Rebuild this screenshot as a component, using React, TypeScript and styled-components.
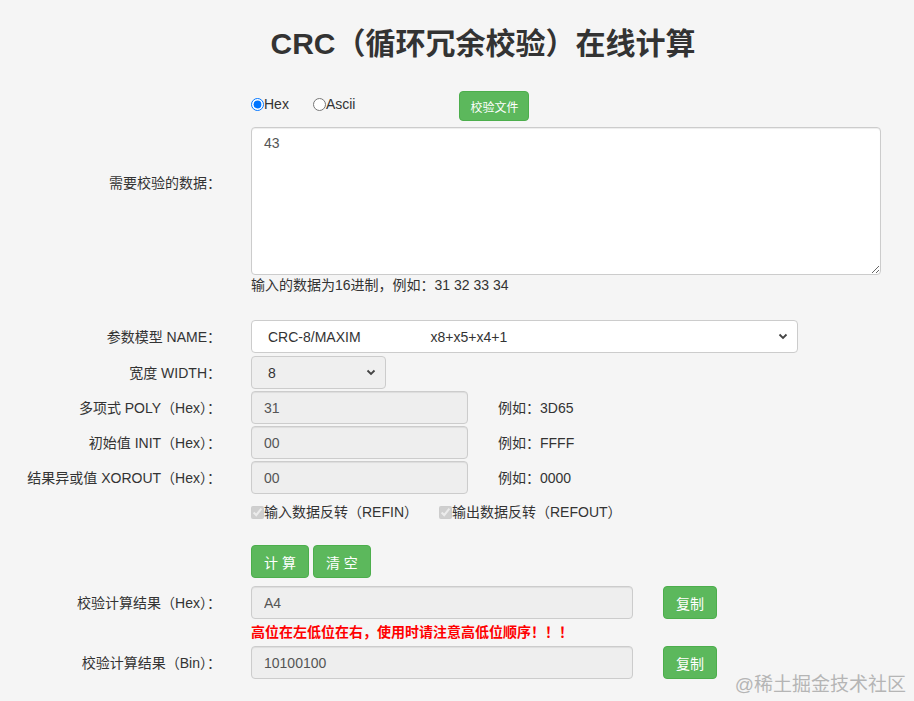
import styled, { createGlobalStyle } from 'styled-components';

const GlobalStyle = createGlobalStyle`
  html, body {
    margin: 0;
    padding: 0;
    background: #f5f5f5;
  }
  body {
    font-family: "Liberation Sans", "Noto Sans CJK SC", sans-serif;
    font-size: 14px;
    color: #333;
  }
  * { box-sizing: border-box; }
`

const Page = styled.div`
  position: relative;
  min-height: 701px;
  overflow: hidden;
  padding-top: 1px;
`

const Title = styled.h2`
  margin: 26px 0 0;
  padding-left: 52px;
  font-size: 30px;
  line-height: 33px;
  font-weight: 600;
  text-align: center;
  color: #333;
`

const Row = styled.div<{ $mt: number }>`
  display: grid;
  grid-template-columns: 221px 1fr;
  column-gap: 30px;
  align-items: center;
  margin-top: ${p => p.$mt}px;
`

const Label = styled.label<{ $top?: number }>`
  text-align: right;
  font-size: 14px;
  line-height: 18px;
  color: #333;
  ${p => (p.$top !== undefined ? `align-self: start; margin-top: ${p.$top}px;` : '')}
`

const Field = styled.div`
  display: flex;
  align-items: center;
`

const RadioLabel = styled.label`
  display: inline-flex;
  align-items: center;
  margin-right: 24px;
  margin-top: -4px;
  font-size: 14px;
  input {
    margin: 0;
    width: 13px;
    height: 13px;
  }
`

const CheckLabel = styled.label`
  display: inline-flex;
  align-items: center;
  margin-right: 21px;
  font-size: 14px;
  line-height: 20px;
  input {
    margin: 0;
    width: 13px;
    height: 13px;
  }
`

const Button = styled.button<{ $small?: boolean; $ml?: number }>`
  height: ${p => (p.$small ? 30 : 33)}px;
  padding: ${p => (p.$small ? '0 10px' : '0 12px')};
  margin-left: ${p => p.$ml ?? 0}px;
  font-family: inherit;
  font-size: ${p => (p.$small ? 12 : 14)}px;
  color: #fff;
  background: #5cb85c;
  border: 1px solid #4cae4c;
  border-radius: 4px;
  cursor: pointer;
  white-space: pre;
`

const TextArea = styled.textarea`
  width: 630px;
  height: 148px;
  padding: 6px 12px;
  font-family: inherit;
  font-size: 14px;
  line-height: 18px;
  color: #555;
  background: #fff;
  border: 1px solid #ccc;
  border-radius: 4px;
  box-shadow: inset 0 1px 1px rgba(0, 0, 0, 0.075);
`

const Hint = styled.div<{ $ml?: number }>`
  font-size: 14px;
  line-height: 18px;
  color: #333;
  margin-left: ${p => p.$ml ?? 0}px;
`

const Warning = styled.div`
  font-size: 14px;
  line-height: 18px;
  font-weight: bold;
  color: #f00;
`

const SelectBox = styled.div<{ $w: number; $grey?: boolean }>`
  display: flex;
  align-items: center;
  width: ${p => p.$w}px;
  height: 33px;
  padding: 0 9px 0 16px;
  background: ${p => (p.$grey ? '#efefef' : '#fff')};
  border: 1px solid #ccc;
  border-radius: 4px;
  color: #333;
  font-size: 14px;
  span + span {
    margin-left: 70px;
  }
  svg {
    margin-left: auto;
  }
`

const Input = styled.input<{ $w: number }>`
  width: ${p => p.$w}px;
  height: 33px;
  padding: 0 12px;
  font-family: inherit;
  font-size: 14px;
  color: #555;
  background: #eee;
  border: 1px solid #ccc;
  border-radius: 4px;
  box-shadow: inset 0 1px 1px rgba(0, 0, 0, 0.075);
  outline: none;
`

const ButtonGroup = styled.div`
  display: flex;
  gap: 4px;
`

const Watermark = styled.div`
  position: absolute;
  right: 8px;
  bottom: 5px;
  font-size: 19px;
  line-height: 22px;
  color: #b5b5b5;
`

const Chevron = () => (
  <svg width="10" height="7" viewBox="0 0 10 7">
    <path d="M1.5 1.5 L5 5 L8.5 1.5" fill="none" stroke="#444" strokeWidth="1.8" />
  </svg>
)

export default function App() {
  return (
    <Page>
      <GlobalStyle />
      <Title>CRC（循环冗余校验）在线计算</Title>

      <Row $mt={31}>
        <span />
        <Field>
          <RadioLabel><input type="radio" name="fmt" defaultChecked />Hex</RadioLabel>
          <RadioLabel><input type="radio" name="fmt" />Ascii</RadioLabel>
          <Button $small $ml={80}>校验文件</Button>
        </Field>
      </Row>

      <Row $mt={6}>
        <Label $top={47}>需要校验的数据：</Label>
        <TextArea defaultValue="43" />
      </Row>

      <Row $mt={1}>
        <span />
        <Hint>输入的数据为16进制，例如：31 32 33 34</Hint>
      </Row>

      <Row $mt={26}>
        <Label>参数模型 NAME：</Label>
        <SelectBox $w={547}>
          <span>CRC-8/MAXIM</span>
          <span>x8+x5+x4+1</span>
          <Chevron />
        </SelectBox>
      </Row>

      <Row $mt={3}>
        <Label>宽度 WIDTH：</Label>
        <SelectBox $w={135} $grey>
          <span>8</span>
          <Chevron />
        </SelectBox>
      </Row>

      <Row $mt={2}>
        <Label>多项式 POLY（Hex）：</Label>
        <Field>
          <Input $w={217} readOnly defaultValue="31" />
          <Hint $ml={30}>例如：3D65</Hint>
        </Field>
      </Row>

      <Row $mt={2}>
        <Label>初始值 INIT（Hex）：</Label>
        <Field>
          <Input $w={217} readOnly defaultValue="00" />
          <Hint $ml={30}>例如：FFFF</Hint>
        </Field>
      </Row>

      <Row $mt={2}>
        <Label>结果异或值 XOROUT（Hex）：</Label>
        <Field>
          <Input $w={217} readOnly defaultValue="00" />
          <Hint $ml={30}>例如：0000</Hint>
        </Field>
      </Row>

      <Row $mt={8}>
        <span />
        <Field>
          <CheckLabel><input type="checkbox" disabled defaultChecked />输入数据反转（REFIN）</CheckLabel>
          <CheckLabel><input type="checkbox" disabled defaultChecked />输出数据反转（REFOUT）</CheckLabel>
        </Field>
      </Row>

      <Row $mt={23}>
        <span />
        <ButtonGroup>
          <Button>计 算</Button>
          <Button>清 空</Button>
        </ButtonGroup>
      </Row>

      <Row $mt={8}>
        <Label>校验计算结果（Hex）：</Label>
        <Field>
          <Input $w={382} readOnly defaultValue="A4" />
          <Button $ml={30}>复制</Button>
        </Field>
      </Row>

      <Row $mt={4}>
        <span />
        <Warning>高位在左低位在右，使用时请注意高低位顺序！！！</Warning>
      </Row>

      <Row $mt={5}>
        <Label>校验计算结果（Bin）：</Label>
        <Field>
          <Input $w={382} readOnly defaultValue="10100100" />
          <Button $ml={30}>复制</Button>
        </Field>
      </Row>

      <Watermark>@稀土掘金技术社区</Watermark>
    </Page>
  )
}
